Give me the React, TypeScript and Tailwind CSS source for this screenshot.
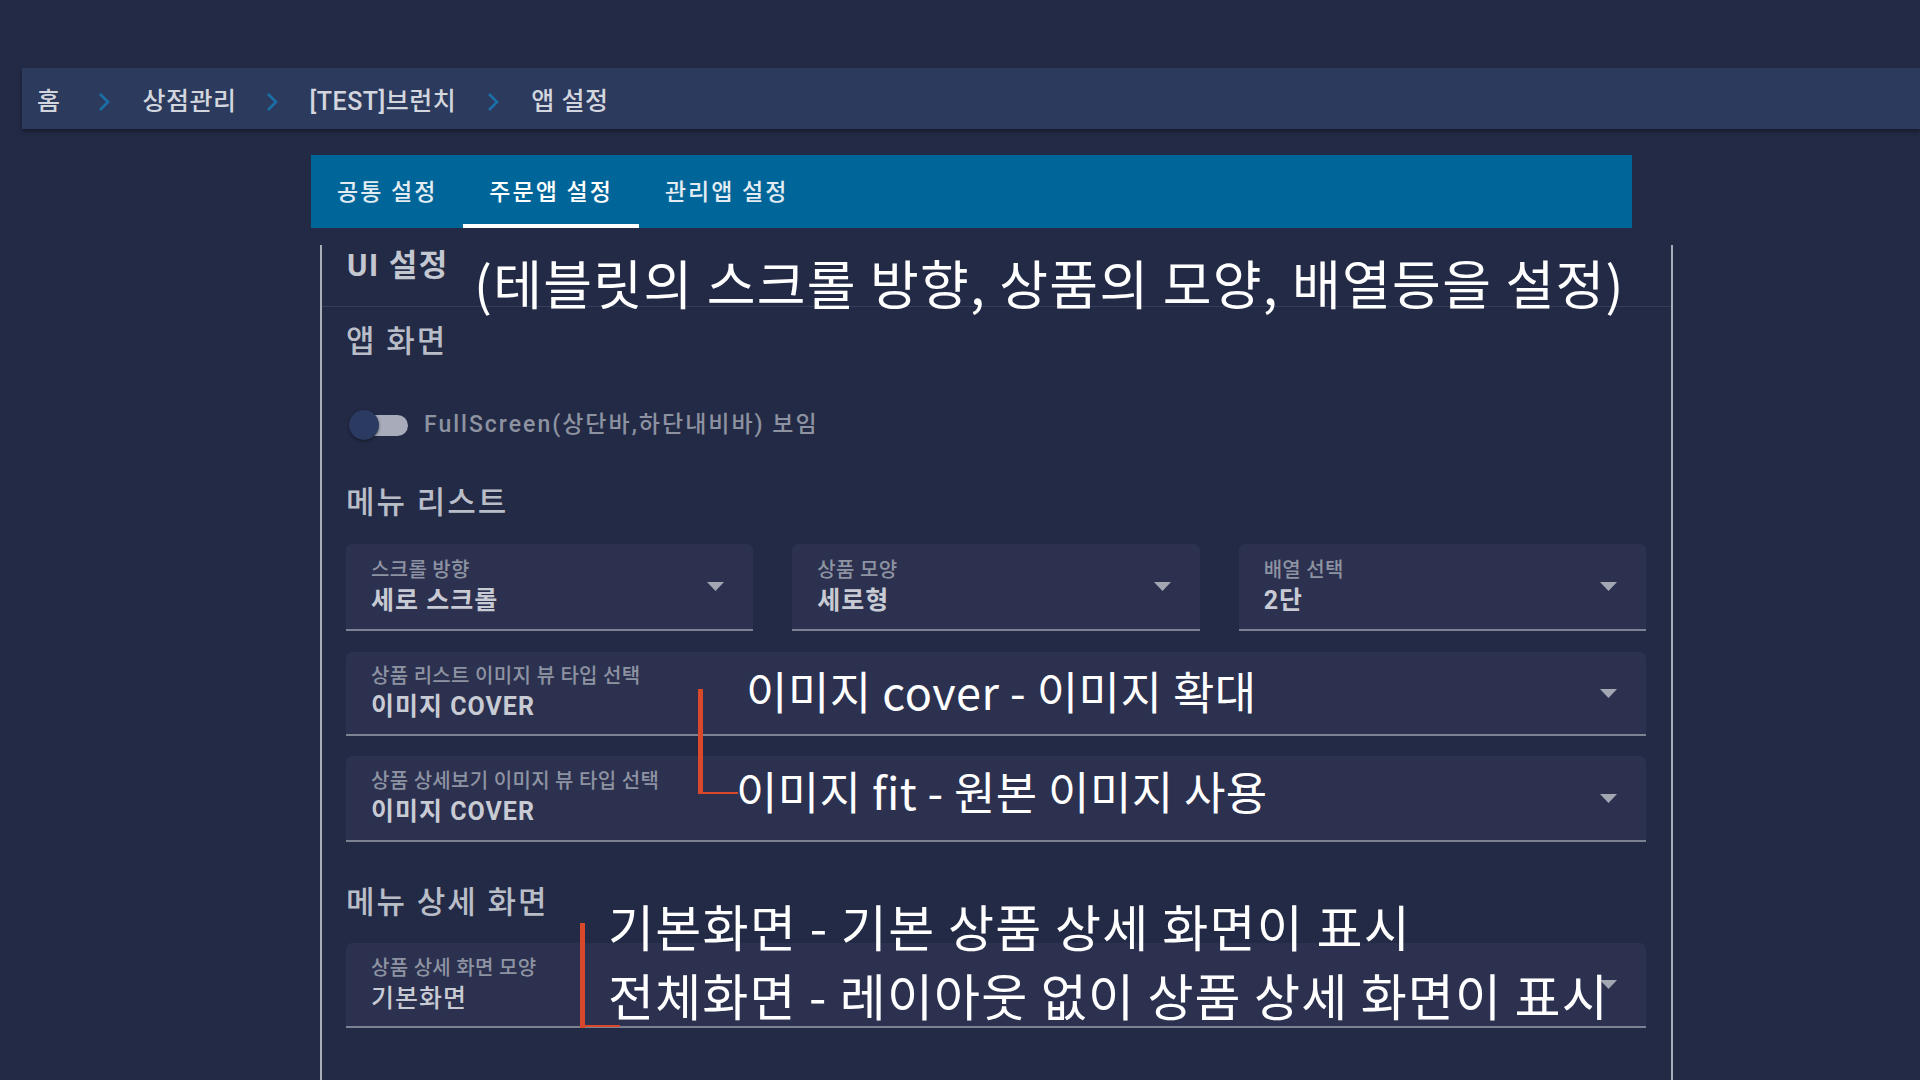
import React from "react";

function Chevron() {
  return (
    <svg width="12" height="20" viewBox="0 0 12 20" className="shrink-0">
      <polyline points="2,2 10,10 2,18" fill="none" stroke="#1a6fa6" strokeWidth="2.6" />
    </svg>
  );
}

function Arrow() {
  return (
    <svg width="17" height="9" viewBox="0 0 17 9" className="shrink-0">
      <polygon points="0,0 17,0 8.5,9" fill="#a3a7b2" />
    </svg>
  );
}

function Select({ label, value, bold = true, h }: { label: string; value: string; bold?: boolean; h: string }) {
  return (
    <div className={`${h} flex items-center bg-[#2c3150] rounded-t-[6px] border-b-2 border-[#7d8292] pl-[25px] pr-[29px]`}>
      <div className="flex-1 flex flex-col">
        <div className="text-[20px] leading-[24px] text-[#8e93a2] font-medium tracking-[0.3px]">{label}</div>
        <div className={`mt-[4px] text-[25px] leading-[30px] tracking-[1px] text-[#c8cbd3] ${bold ? "font-bold" : "font-medium"}`}>{value}</div>
      </div>
      <Arrow />
    </div>
  );
}

const annot = "absolute leading-none text-white font-['Noto_Sans_CJK_KR',sans-serif] whitespace-nowrap";

export default function App() {
  return (
    <div className="relative w-[1920px] h-[1080px] overflow-hidden bg-[#232a45] font-['Roboto','Noto_Sans_CJK_KR',sans-serif]">
      <div className="h-[68px]" />
      <nav className="ml-[22px] h-[61px] bg-[#2c3a5d] shadow-[0_3px_4px_rgba(0,0,0,0.35)] flex items-center pl-[15px] pt-[6px] text-[25px] tracking-[0.5px] text-[#d3d6de] font-medium">
        <span>홈</span>
        <span className="ml-[37px] mr-[33px] flex"><Chevron /></span>
        <span>상점관리</span>
        <span className="ml-[29px] mr-[32px] flex"><Chevron /></span>
        <span>[TEST]브런치</span>
        <span className="ml-[31px] mr-[32px] flex"><Chevron /></span>
        <span>앱 설정</span>
      </nav>

      <div className="ml-[311px] mt-[26px] w-[1321px] h-[73px] bg-[#006699] flex text-[23px] tracking-[2px] font-medium">
        <div className="px-[26px] pt-[4px] flex items-center text-[#e3ecf3]">공통 설정</div>
        <div className="relative px-[26px] pt-[4px] flex items-center text-white">
          주문앱 설정
          <div className="absolute left-0 right-0 bottom-0 h-[4px] bg-white" />
        </div>
        <div className="px-[26px] pt-[4px] flex items-center text-[#e3ecf3]">관리앱 설정</div>
      </div>

      <div className="ml-[320px] mt-[17px] w-[1353px] h-[900px] border-x-2 border-[#a9aeb9]">
        <div className="h-[62px] border-b border-[#363d5b] pl-[25px] pt-[3px]">
          <div className="text-[31px] leading-[36px] tracking-[1.5px] text-[#c3c7d0] font-bold">UI 설정</div>
        </div>
        <div className="pl-[24px] pr-[25px]">
          <div className="h-[70px] flex items-center text-[31px] tracking-[2px] text-[#b9bdc8] font-medium">앱 화면</div>
          <div className="h-[96px] flex items-center">
            <div className="relative ml-[3px] w-[59px] h-[30px]">
              <div className="absolute left-[7px] top-[5px] w-[52px] h-[21px] rounded-full bg-[#a8acba]" />
              <div className="absolute left-0 top-0 w-[30px] h-[30px] rounded-full bg-[#2b3a60] shadow-[0_1px_3px_rgba(0,0,0,0.5)]" />
            </div>
            <div className="ml-[16px] text-[23px] tracking-[2px] text-[#8d92a1] font-medium">FullScreen(상단바,하단내비바) 보임</div>
          </div>
          <div className="h-[60px] flex items-center text-[31px] tracking-[2px] text-[#b9bdc8] font-medium">메뉴 리스트</div>
          <div className="mt-[11px] grid grid-cols-3 gap-[39px]">
            <Select h="h-[87px]" label="스크롤 방향" value="세로 스크롤" />
            <Select h="h-[87px]" label="상품 모양" value="세로형" />
            <Select h="h-[87px]" label="배열 선택" value="2단" />
          </div>
          <div className="mt-[21px]">
            <Select h="h-[84px]" label="상품 리스트 이미지 뷰 타입 선택" value="이미지 COVER" />
          </div>
          <div className="mt-[20px]">
            <Select h="h-[86px]" label="상품 상세보기 이미지 뷰 타입 선택" value="이미지 COVER" />
          </div>
          <div className="h-[101px] flex items-end pb-[22px]">
            <div className="text-[31px] leading-[36px] tracking-[2px] text-[#b9bdc8] font-medium">메뉴 상세 화면</div>
          </div>
          <Select h="h-[85px]" label="상품 상세 화면 모양" value="기본화면" bold={false} />
        </div>
      </div>

      {/* annotations */}
      <div className={`${annot} left-[474px] top-[256px] text-[53px] tracking-[1.3px]`}>
        (테블릿의 스크롤 방향, 상품의 모양, 배열등을 설정)
      </div>

      <div className="absolute left-[698px] top-[689px] w-[5px] h-[105px] bg-[#d9482b]" />
      <div className="absolute left-[698px] top-[792px] w-[40px] h-[2px] bg-[#d9482b]" />
      <div className={`${annot} left-[746px] top-[668px] text-[45px] tracking-[0.5px]`}>
        이미지 cover - 이미지 확대
      </div>
      <div className={`${annot} left-[736px] top-[768px] text-[45px] tracking-[0.4px]`}>
        이미지 fit - 원본 이미지 사용
      </div>

      <div className="absolute left-[580px] top-[923px] w-[5px] h-[105px] bg-[#d9482b]" />
      <div className="absolute left-[580px] top-[1025px] w-[40px] h-[2px] bg-[#d9482b]" />
      <div className={`${annot} left-[608px] top-[900px] text-[50px] tracking-[1.3px]`}>
        기본화면 - 기본 상품 상세 화면이 표시
      </div>
      <div className={`${annot} left-[608px] top-[969px] text-[50px] tracking-[1.15px]`}>
        전체화면 - 레이아웃 없이 상품 상세 화면이 표시
      </div>
    </div>
  );
}
